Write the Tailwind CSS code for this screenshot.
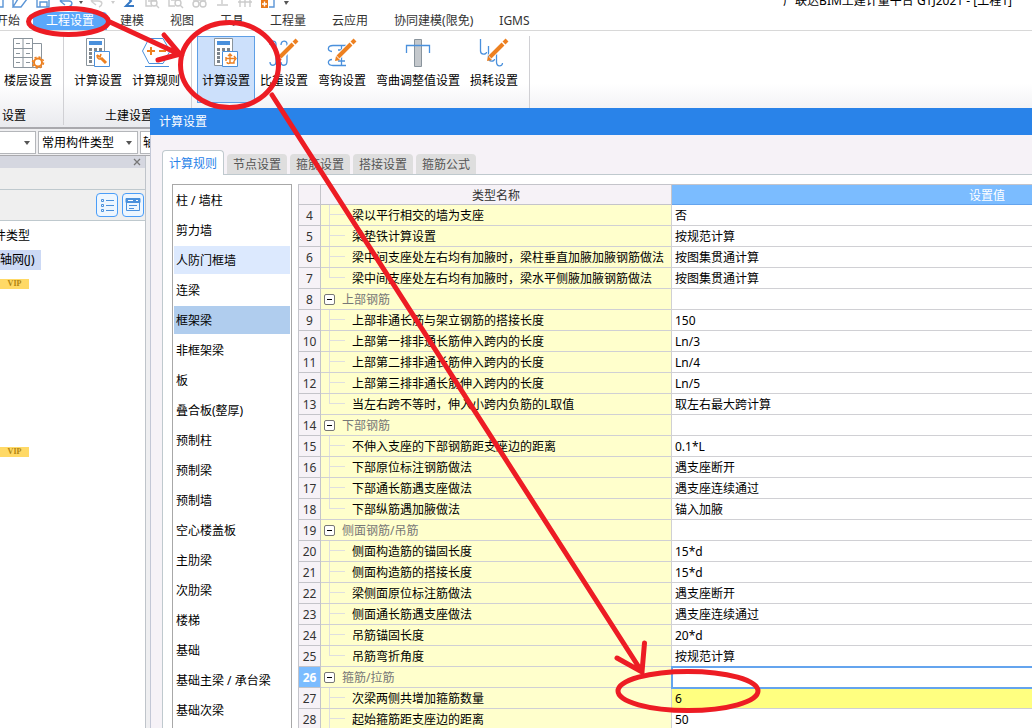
<!DOCTYPE html>
<html lang="zh-CN">
<head>
<meta charset="utf-8">
<title>计算设置</title>
<script src="https://cdn.jsdelivr.net/npm/@tailwindcss/browser@4"></script>
</head>
<body class="bg-white">
<div class="relative h-screen overflow-hidden bg-[#efeff1] font-['Noto_Sans','Noto_Sans_CJK_SC',sans-serif] text-xs leading-4 text-black">

  <!-- Title bar, scrolled partly out of the window -->
  <header class="-mt-2 flex h-[18px] items-center justify-between bg-white pr-5">
    <div class="flex items-center">
      <svg class="h-4 w-[280px]" viewBox="0 0 280 16" fill="none" stroke="#5b95d6" stroke-width="1.4">
        <path d="M0 14h3V2"/>
        <path d="M13 14V4h4l2 2h4M13 14l5-8h9l-6 8z"/>
        <path d="M37 1h12v13H37zM40 14v-5h7v5"/>
        <path d="M60 8l5-5M60 8l5 4M60 8h9c4 0 4 5-1 6"/>
        <path d="M79 8l2 3 2-3z" fill="#555" stroke="none"/>
        <path d="M91 8l5-5M91 8l5 4M91 8h7c5 0 5 4 1 6" stroke="#cfcfcf"/>
        <path d="M111 8l2 3 2-3z" fill="#ccc" stroke="none"/>
        <path d="M134 3h-8l5 5-5 5h8" stroke="#3578c4" stroke-width="2"/>
        <g stroke="#cbcbcb"><path d="M146 2v11h6M148 8h9"/><circle cx="154" cy="10" r="3"/><path d="M156 12l3 3M169 2v11h6M171 7h8"/><circle cx="178" cy="10" r="3"/><path d="M180 12l3 3"/><circle cx="196" cy="11" r="3"/><circle cx="203" cy="11" r="3"/><path d="M193 7h13M217 12h11M222 5v6M238 5h14M238 9h14M240 3v11M245 3v11M250 3v11"/></g>
        <path d="M261 7h7v8h-7z" fill="#e87817" stroke="none"/><path d="M264.500 8.500v5M262 11h5" stroke="#fff"/><path d="M269 14h5V5"/>
      </svg>
      <svg class="h-4 w-4" viewBox="0 0 16 16" fill="#555"><path d="M4 8h5l-3 4z"/></svg>
    </div>
    <span class="whitespace-nowrap">广联达BIM土建计量平台 GTJ2021 - [工程1]</span>
  </header>

  <nav class="flex h-[21px] items-end border-b border-[#d8d8d8] bg-white text-[#333]">
    <div class="-ml-[17px] flex items-end whitespace-nowrap">
      <a href="#" class="px-[13px] pb-px">开始</a>
      <a href="#" class="flex h-[18px] items-end rounded-t bg-[#5aa7fa] px-[13px] pb-px text-white">工程设置</a>
      <a href="#" class="px-[13px] pb-px">建模</a>
      <a href="#" class="px-[13px] pb-px">视图</a>
      <a href="#" class="px-[13px] pb-px">工具</a>
      <a href="#" class="px-[13px] pb-px">工程量</a>
      <a href="#" class="px-[13px] pb-px">云应用</a>
      <a href="#" class="px-[13px] pb-px">协同建模(限免)</a>
      <a href="#" class="px-[13px] pb-px">IGMS</a>
    </div>
  </nav>

  <!-- Ribbon -->
  <section class="flex h-[98px] border-b-2 border-[#a9a9ad] bg-linear-to-b from-white from-55% to-[#e9eaee] pt-[5px] pb-[2px] whitespace-nowrap">
    <div class="-ml-[6px] flex flex-col border-r border-[#d0d0d4] pr-[6px] pl-[5px]">
      <button type="button" class="flex h-[67px] flex-col items-center gap-[2px] border border-transparent px-1">
        <svg class="h-[34px] w-9" viewBox="0 0 36 34" fill="#fff" stroke="#8a949c">
          <path d="M3.500 1.500h19v29h-19zM13 1.500v29M3.500 11.500h19M3.500 20.500h19M22.500 6.500h9v24h-9z"/>
          <path d="M6 6.500h4M16 6.500h4M6 16.500h4M16 16.500h4M6 25.500h4M16 25.500h4"/>
          <circle cx="28" cy="25.500" r="4" stroke="#ed8020" stroke-width="2"/>
          <circle cx="28" cy="25.500" r="5.500" fill="none" stroke="#ed8020" stroke-width="1.500" stroke-dasharray="2.200 2.100"/>
        </svg>
        <span>楼层设置</span>
      </button>
      <span class="pt-[5px] pl-[3px]">设置</span>
    </div>
    <div class="flex flex-col items-center border-r border-[#d0d0d4] pr-[6px] pl-[5px]">
      <div class="flex">
        <button type="button" class="flex h-[67px] flex-col items-center gap-[2px] border border-transparent px-1">
          <svg class="h-[34px] w-9" viewBox="0 0 36 34">
            <path d="M6.500 1.500h18v27h-18z" fill="#fff" stroke="#8a949c"/>
            <path d="M9 4h13v4H9z" fill="#4a90dc"/>
            <path d="M9 11h3v3H9zM14 11h3v3h-3zM19 11h3v3h-3zM9 15h3v3H9zM9 19h3v3H9zM9 23h3v3H9z" fill="#7d858c"/>
            <path d="M14.500 14.500h15v15h-15z" fill="#fff" stroke="#4a90dc"/>
            <path d="M21 21l5 5" stroke="#ed8020" stroke-width="3"/><path d="M17 18l3 2 1-3M17 18c0 4 3 5 5 3" fill="none" stroke="#ed8020" stroke-width="1.600"/>
          </svg>
          <span>计算设置</span>
        </button>
        <button type="button" class="flex h-[67px] flex-col items-center gap-[2px] border border-transparent px-1">
          <svg class="h-[34px] w-9" viewBox="0 0 36 34" fill="none">
            <path d="M11 1.500h14l7 12.500-7 12.500H11L4.500 14z" fill="#fff" stroke="#4a90dc"/>
            <path d="M7 29.500h24" stroke="#4a90dc"/>
            <path d="M9 14h8M13 10v8M21 14h7" stroke="#ed8020" stroke-width="2"/>
          </svg>
          <span>计算规则</span>
        </button>
      </div>
      <span class="pt-[5px] pl-1">土建设置</span>
    </div>
    <div class="flex border-r border-[#d0d0d4] pr-[6px] pl-[5px]">
      <button type="button" class="flex h-[67px] flex-col items-center gap-[2px] border border-[#5e9fe6] bg-[#cce0fb] px-1">
        <svg class="h-[34px] w-9" viewBox="0 0 36 34">
          <path d="M6.500 1.500h18v27h-18z" fill="#fff" stroke="#8a949c"/>
          <path d="M9 4h13v4H9z" fill="#4a90dc"/>
          <path d="M9 11h3v3H9zM14 11h3v3h-3zM19 11h3v3h-3zM9 15h3v3H9zM9 19h3v3H9zM9 23h3v3H9z" fill="#7d858c"/>
          <path d="M14.500 14.500h15v15h-15z" fill="#fff" stroke="#4a90dc"/>
          <path d="M22 18v7c0 2-3 2-3 0M18 21.500h9M20 19l2-2 2 2M26 19l2 2.500-2 2.500M18 20v4M22 26h4v-2" fill="none" stroke="#ed8020" stroke-width="1.400"/>
        </svg>
        <span>计算设置</span>
      </button>
      <button type="button" class="flex h-[67px] flex-col items-center gap-[2px] border border-transparent px-1">
        <svg class="h-[34px] w-9" viewBox="0 0 36 34" fill="none" stroke="#4a90dc" stroke-width="1.300">
          <path d="M4 8c0-5 6-5 6-1v17c0 6-6 5-6 1M15 8c0-5 6-5 6-1v17c0 6-6 5-6 1"/>
          <path d="M14 20l14-14" stroke="#fff" stroke-width="7"/><path d="M14 20l13-13" stroke="#ed8020" stroke-width="4"/><path d="M28 6l3-3" stroke="#ed8020" stroke-width="4"/><path d="M11 24l1-5 4 4z" fill="#ed8020" stroke="none"/>
        </svg>
        <span>比重设置</span>
      </button>
      <button type="button" class="flex h-[67px] flex-col items-center gap-[2px] border border-transparent px-1">
        <svg class="h-[34px] w-9" viewBox="0 0 36 34" fill="none" stroke="#4a90dc" stroke-width="1.300">
          <path d="M22 8.500H9c-6 0-6 6-1 6M22 28.500H9c-6 0-6-6-1-6M17.500 9v19M14 13h7M14 24h7"/>
          <path d="M14 20l14-14" stroke="#fff" stroke-width="6"/><path d="M14 20l13-13" stroke="#ed8020" stroke-width="4"/><path d="M28 6l3-3" stroke="#ed8020" stroke-width="4"/><path d="M11 24l1-5 4 4z" fill="#ed8020" stroke="none"/>
        </svg>
        <span>弯钩设置</span>
      </button>
      <button type="button" class="flex h-[67px] flex-col items-center gap-[2px] border border-transparent px-1">
        <svg class="h-[34px] w-9" viewBox="0 0 36 34">
          <path d="M14.500 2.500h7v27h-7z" fill="#c4c8cc" stroke="#8a949c"/>
          <path d="M6.500 16V8.500h23V16" fill="none" stroke="#4a90dc" stroke-width="1.300"/>
        </svg>
        <span>弯曲调整值设置</span>
      </button>
      <button type="button" class="flex h-[67px] flex-col items-center gap-[2px] border border-transparent px-1">
        <svg class="h-[34px] w-9" viewBox="0 0 36 34" fill="none" stroke="#4a90dc" stroke-width="1.300">
          <path d="M4.500 2v12c0 4 6 4 6 1M12.500 9v12c0 4 6 4 6 1M20.500 17v8c0 5 6 5 6 1"/>
          <path d="M14 20l14-14" stroke="#fff" stroke-width="6"/><path d="M14 20l13-13" stroke="#ed8020" stroke-width="4"/><path d="M28 6l3-3" stroke="#ed8020" stroke-width="4"/><path d="M11 24l1-5 4 4z" fill="#ed8020" stroke="none"/>
        </svg>
        <span>损耗设置</span>
      </button>
    </div>
  </section>

  <!-- Component filters -->
  <div class="flex gap-[2px] border-b border-[#a9a9ad] pt-[2px] pb-px">
    <div class="flex h-[23px] w-9 items-center justify-end border border-l-0 border-[#b4b6ba] bg-white pr-1">
      <svg class="h-2 w-2" viewBox="0 0 8 8" fill="#555"><path d="M1 2h6L4 6z"/></svg>
    </div>
    <label class="flex h-[23px] w-[100px] items-center border border-[#b4b6ba] bg-white pr-1 pl-[3px]">
      <select aria-label="构件类型" class="min-w-0 flex-1 appearance-none bg-transparent outline-none"><option>常用构件类型</option></select>
      <svg class="h-2 w-2" viewBox="0 0 8 8" fill="#555"><path d="M1 2h6L4 6z"/></svg>
    </label>
    <div class="flex h-[23px] w-20 items-center border border-[#b4b6ba] bg-white pl-[2px]">轴网</div>
  </div>

  <!-- Component tree panel -->
  <aside class="flex h-full w-[146px] flex-col border-r border-[#bfc4ca] bg-white">
    <div class="flex h-[12px] shrink-0 items-center justify-end bg-[#d5d7e0] pr-[2px]">
      <button type="button" aria-label="关闭" class="flex h-3 w-3 items-center justify-center"><svg class="h-2 w-2" viewBox="0 0 8 8" stroke="#777" stroke-width="1.300"><path d="M1 1l6 6M7 1l-6 6"/></svg></button>
    </div>
    <div class="h-[22px] shrink-0 border-b border-[#bfc9ce] bg-[#efefef]"></div>
    <div class="flex h-[31px] shrink-0 items-center justify-end gap-1 border-b border-[#bfc9ce] bg-[#efefef] pr-px">
      <button type="button" aria-label="列表" class="flex h-6 w-[22px] items-center justify-center rounded border border-[#4a9df8] bg-[#edf6ff]">
        <svg class="h-4 w-4" viewBox="0 0 16 16" fill="none" stroke="#4a90dc"><path d="M2.500 2.500h2v2h-2zM2.500 7.500h2v2h-2zM2.500 12.500h2v2h-2zM7 3.500h8M7 8.500h8M7 13.500h8"/></svg>
      </button>
      <button type="button" aria-label="窗口" class="flex h-6 w-[22px] items-center justify-center rounded border border-[#4a9df8] bg-[#edf6ff]">
        <svg class="h-4 w-4" viewBox="0 0 16 16" fill="none" stroke="#4a90dc"><path d="M1 1.500h14v4H1z" fill="#4a90dc"/><path d="M1.500 1.500h13v12h-13zM4 8.500h8M4 11.500h5"/><path d="M3 3.500h5M11 3.500h2" stroke="#fff"/></svg>
      </button>
    </div>
    <div class="flex flex-col items-start pt-[5px]">
      <span class="flex h-5 items-center"><span class="-ml-[18px]">构件类型</span></span>
      <span class="mt-1 flex h-5 items-center bg-[#ccd9f5] pr-[7px]"><span>轴网(J)</span></span>
      <span class="mt-[9px] flex h-[10px] w-[29px] items-center justify-center bg-[#ffd966] font-['Liberation_Serif',serif] text-[8px] font-bold text-[#b08410]">VIP</span>
      <span class="mt-[158px] flex h-[10px] w-[29px] items-center justify-center bg-[#ffd966] font-['Liberation_Serif',serif] text-[8px] font-bold text-[#b08410]">VIP</span>
    </div>
  </aside>

  <!-- Calculation settings dialog window -->
  <div role="dialog" aria-label="计算设置" class="absolute top-[108px] right-0 bottom-0 left-[150px] flex flex-col overflow-hidden bg-[#f6f2f7]">
    <h1 class="flex h-[27px] shrink-0 items-center bg-[#2983e9] pl-[9px] text-white">计算设置</h1>
    <div class="flex min-h-0 flex-1 flex-col border-l border-[#c3c7d6] pt-[15px] pl-[11px]">
      <div class="flex h-6 shrink-0 items-end gap-[3px] whitespace-nowrap text-[#555]">
        <button type="button" class="z-10 -mb-px flex h-[25px] w-[62px] shrink-0 items-center justify-center rounded-t border border-b-0 border-[#bfc9ce] bg-white pt-[2px] text-[#2983e9]">计算规则</button>
        <button type="button" class="flex h-5 w-[60px] items-center justify-center rounded-t bg-[#dedede] pt-[2px]">节点设置</button>
        <button type="button" class="flex h-5 w-[60px] items-center justify-center rounded-t bg-[#dedede] pt-[2px]">箍筋设置</button>
        <button type="button" class="flex h-5 w-[60px] items-center justify-center rounded-t bg-[#dedede] pt-[2px]">搭接设置</button>
        <button type="button" class="flex h-5 w-[60px] items-center justify-center rounded-t bg-[#dedede] pt-[2px]">箍筋公式</button>
      </div>
      <div class="flex min-h-0 flex-1 gap-[6px] overflow-hidden border-t border-l border-[#bfc9ce] bg-white pt-[9px] pl-[9px]">
        <ul id="members" class="flex w-[120px] shrink-0 flex-col gap-[2px] border border-b-0 border-[#a8a8a8] p-px"></ul>
        <div class="min-w-0 flex-1 overflow-hidden">
          <table class="w-[1004px] table-fixed border-separate border-spacing-0 border-t border-l border-[#c4c4ca]">
            <colgroup><col class="w-[22px]"><col class="w-[351px]"><col></colgroup>
            <thead>
              <tr class="h-5 bg-[#f6f2f7] text-[#333]">
                <th class="border-r border-b border-[#c4c4ca] p-0"></th>
                <th class="border-r border-b border-[#c4c4ca] p-0 pt-[2px] font-normal">类型名称</th>
                <th class="border-b border-[#64a4ee] bg-[#7bbcff] p-0 pt-[2px] font-normal text-white">设置值</th>
              </tr>
            </thead>
            <tbody id="rows"></tbody>
          </table>
        </div>
      </div>
    </div>
  </div>

  <!-- Hand-drawn callouts -->
  <svg class="pointer-events-none absolute top-0 left-0 z-20 h-[728px] w-[1032px]" viewBox="0 0 1032 728" fill="none" stroke="#ed1c24" stroke-width="5" stroke-linecap="round">
    <ellipse cx="68.500" cy="21.500" rx="40" ry="13"/>
    <path d="M110 22L179 54M164 35l16 19-22 6"/>
    <ellipse cx="229.500" cy="65" rx="49" ry="42.500"/>
    <path d="M272 95L642 672M644.500 643l-2.500 29-25-14"/>
    <ellipse cx="688" cy="691" rx="70" ry="19.500"/>
  </svg>
</div>

<script>
const members = ['柱 / 墙柱','剪力墙','人防门框墙','连梁','框架梁','非框架梁','板','叠合板(整厚)','预制柱','预制梁','预制墙','空心楼盖板','主肋梁','次肋梁','楼梯','基础','基础主梁 / 承台梁','基础次梁'];
document.getElementById('members').innerHTML = members.map((m, i) => {
  const bg = i === 2 ? 'bg-[#dce9fe]' : i === 4 ? 'bg-[#b0cdee]' : 'bg-white';
  return `<li class="${bg}"><button type="button" class="flex h-7 w-full items-center pt-[2px] pl-[2px] whitespace-nowrap">${m}</button></li>`;
}).join('');

// [name, value]; a row without a value is a group heading
const rows = [
  ['梁以平行相交的墙为支座','否'],['梁垫铁计算设置','按规范计算'],
  ['梁中间支座处左右均有加腋时，梁柱垂直加腋加腋钢筋做法','按图集贯通计算'],
  ['梁中间支座处左右均有加腋时，梁水平侧腋加腋钢筋做法','按图集贯通计算'],
  ['上部钢筋'],['上部非通长筋与架立钢筋的搭接长度','150'],['上部第一排非通长筋伸入跨内的长度','Ln/3'],
  ['上部第二排非通长筋伸入跨内的长度','Ln/4'],['上部第三排非通长筋伸入跨内的长度','Ln/5'],
  ['当左右跨不等时，伸入小跨内负筋的L取值','取左右最大跨计算'],
  ['下部钢筋'],['不伸入支座的下部钢筋距支座边的距离','0.1*L'],['下部原位标注钢筋做法','遇支座断开'],
  ['下部通长筋遇支座做法','遇支座连续通过'],['下部纵筋遇加腋做法','锚入加腋'],
  ['侧面钢筋/吊筋'],['侧面构造筋的锚固长度','15*d'],['侧面构造筋的搭接长度','15*d'],
  ['梁侧面原位标注筋做法','遇支座断开'],['侧面通长筋遇支座做法','遇支座连续通过'],
  ['吊筋锚固长度','20*d'],['吊筋弯折角度','按规范计算'],
  ['箍筋/拉筋'],['次梁两侧共增加箍筋数量','6'],['起始箍筋距支座边的距离','50']
];
document.getElementById('rows').innerHTML = rows.map(([name, value], i) => {
  const n = i + 4, group = value === undefined;
  const last = rows[i + 1] && rows[i + 1][1] === undefined;
  const num = n === 26 ? 'bg-[#7bbcff] font-bold text-white' : 'bg-[#f6f2f7] font-normal text-[#333]';
  const val = n === 26 ? 'relative bg-white outline-2 -outline-offset-1 outline-[#64a4ee]' : n === 27 ? 'bg-[#ffff80]' : 'bg-white';
  const lead = group
    ? `<button type="button" aria-label="折叠" class="ml-[3px] flex h-[11px] w-[11px] items-center justify-center rounded-xs border border-[#777] bg-white"><span class="h-px w-[5px] bg-black"></span></button><span class="ml-[7px] pt-[2px] text-[#777]">${name}</span>`
    : `<span class="ml-2 flex h-5 w-4 flex-col"><span class="h-[10px] border-b border-l border-[#dfdfdf]"></span><span class="${last ? 'h-[10px]' : 'h-[10px] border-l border-[#dfdfdf]'}"></span></span><span class="ml-[7px] pt-[2px]">${name}</span>`;
  return `<tr class="h-[21px]"><th scope="row" class="border-r border-b border-[#c4c4ca] p-0 pt-[2px] ${num}">${n}</th>`
    + `<td class="border-r border-b border-[#d0d0d4] bg-[#ffffcc] p-0"><div class="flex h-5 items-center whitespace-nowrap">${lead}</div></td>`
    + `<td class="border-b border-[#d0d0d4] p-0 pt-[2px] pl-[3px] ${val}">${value || ''}</td></tr>`;
}).join('');
</script>
</body>
</html>
